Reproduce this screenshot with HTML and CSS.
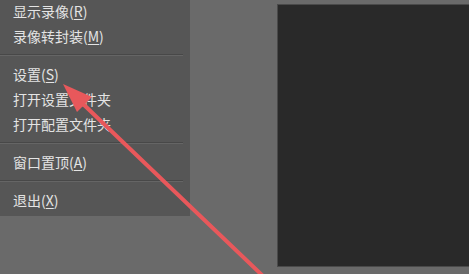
FILE: index.html
```html
<!DOCTYPE html>
<html lang="zh-CN">
<head>
<meta charset="utf-8">
<link rel="stylesheet" href="styles.css">
</head>
<body>
<div class="screen">
  <ul class="menu">
    <li class="item first">显示录像(<u>R</u>)</li>
    <li class="item">录像转封装(<u>M</u>)</li>
    <li class="sep"></li>
    <li class="item">设置(<u>S</u>)</li>
    <li class="item">打开设置文件夹</li>
    <li class="item">打开配置文件夹</li>
    <li class="sep"></li>
    <li class="item">窗口置顶(<u>A</u>)</li>
    <li class="sep"></li>
    <li class="item">退出(<u>X</u>)</li>
  </ul>
  <div class="preview"></div>
  <svg class="arrow" width="469" height="274" viewBox="0 0 469 274">
    <line x1="82" y1="103" x2="264" y2="277" stroke="#e8585b" stroke-width="4" stroke-linecap="round"/>
    <polygon points="63,84 77,112 92,97" fill="#e8585b"/>
  </svg>
</div>
</body>
</html>
```
FILE: styles.css
```css
html, body {
  margin: 0;
  padding: 0;
  background: #6a6a6a;
}
.screen {
  position: relative;
  width: 469px;
  height: 274px;
  overflow: hidden;
  display: flex;
  align-items: flex-start;
  gap: 88px;
  font-family: "Noto Sans CJK SC", "Noto Sans", sans-serif;
}
.menu {
  list-style: none;
  margin: -1px 0 0 0;
  padding: 0 0 3px 0;
  width: 190px;
  background: #565656;
  flex: none;
}
.item {
  height: 25px;
  line-height: 25px;
  padding-left: 13px;
  font-size: 14px;
  color: #e4e4e4;
  white-space: nowrap;
}
.item u {
  text-decoration: underline;
  text-underline-offset: 2px;
}
.sep {
  box-sizing: border-box;
  height: 13px;
  padding: 5px 7px 0 0;
}
.sep::before {
  content: "";
  display: block;
  height: 1px;
  background: #484848;
  border-bottom: 1px solid #656565;
}
.preview {
  flex: none;
  margin-top: 5px;
  width: 191px;
  height: 261px;
  background: #292929;
  box-shadow: 0 0 0 1px #4a4a4a;
}
.arrow {
  position: absolute;
  left: 0;
  top: 0;
}
```
